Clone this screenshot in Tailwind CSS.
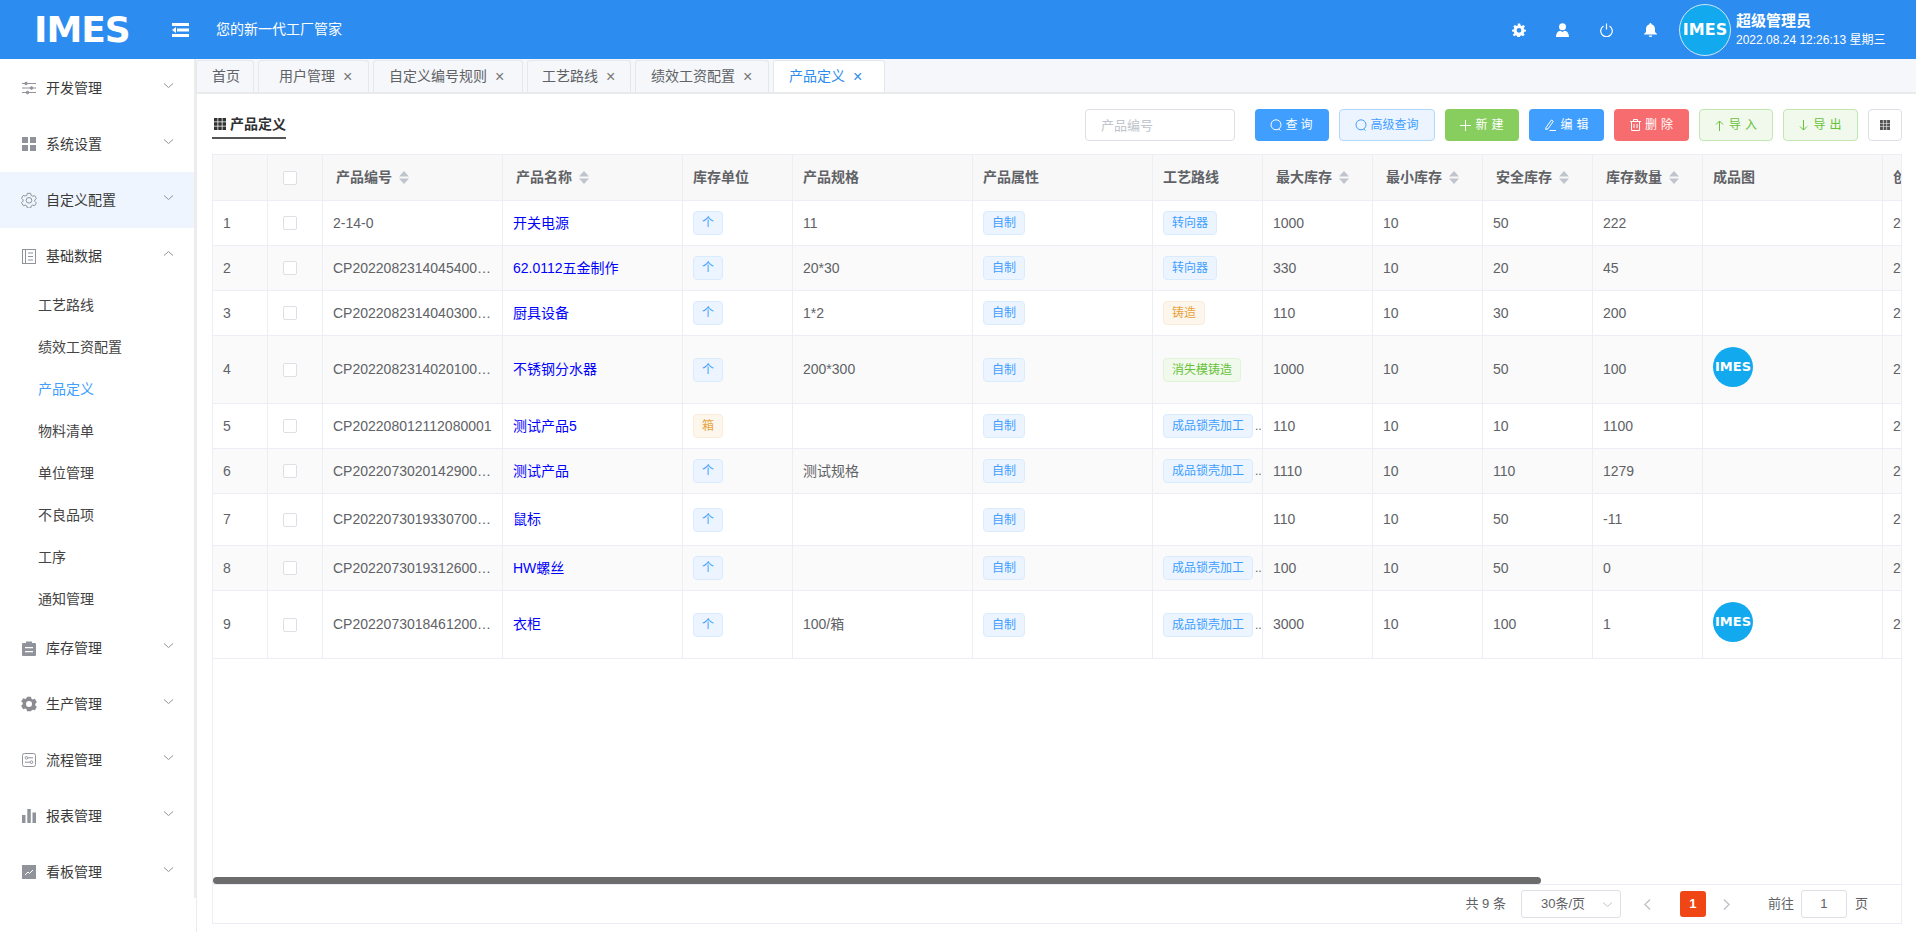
<!DOCTYPE html>
<html lang="zh-CN">
<head>
  <meta charset="UTF-8" />
  <title>产品定义</title>
  <script src="https://cdn.jsdelivr.net/npm/@tailwindcss/browser@4"></script>
</head>
<body class="h-screen overflow-hidden flex flex-col bg-white text-[14px] text-[#606266] font-['Liberation_Sans','Noto_Sans_CJK_SC',sans-serif]">

  <!-- Top bar -->
  <header class="h-[59px] shrink-0 bg-[#2d8cf0] text-white flex items-center">
    <div class="w-[172px] pl-[34px] shrink-0 text-[36px] leading-none font-bold tracking-[-1px] font-['DejaVu_Sans',sans-serif]">IMES</div>
    <svg class="w-[17px] h-[14px]" viewBox="0 0 17 14" fill="#fff"><rect width="17" height="3"/><rect x="5" y="5.5" width="12" height="3"/><path d="M0 7l4-3v6z"/><rect y="11" width="17" height="3"/></svg>
    <div class="ml-[27px]">您的新一代工厂管家</div>
    <div class="ml-auto flex items-center">
      <svg class="w-[14px] h-[14px] mr-[30px]" viewBox="0 0 24 24" fill="#fff"><path fill-rule="evenodd" d="M10 1h4l.6 3 2.3 1 2.6-1.7 2.8 2.8L20 8.700l1 2.300 3 .6v3l-3 .6-1 2.300 1.700 2.600-2.800 2.800-2.600-1.700-2.300 1-.6 3h-4l-.6-3-2.300-1-2.600 1.700-2.800-2.800L4 17.500l-1-2.300-3-.6v-3l3-.6 1-2.300-1.700-2.600 2.800-2.800 2.600 1.700 2.300-1zM12 8.500a4 4 0 1 0 0 8 4 4 0 0 0 0-8z"/></svg>
      <svg class="w-[13px] h-[14px] mr-[31px]" viewBox="0 0 13 14" fill="#fff"><circle cx="6.500" cy="3.700" r="3.500"/><path d="M0 14c0-4 2-6 4.500-6.300L6.500 9l2-1.300C11 8 13 10 13 14z"/></svg>
      <svg class="w-[13px] h-[14px] mr-[31px]" viewBox="0 0 13 14" fill="none" stroke="#fff" stroke-width="1.200"><path d="M3.500 3a5.800 5.800 0 1 0 6 0"/><path d="M6.500 0.500v6"/></svg>
      <svg class="w-[13px] h-[14px] mr-[22px]" viewBox="0 0 13 14" fill="#fff"><path d="M6.500 0c.7 0 1 .5 1 1.200C9.800 1.800 11 3.700 11 6v3l2 2v.6H0V11l2-2V6c0-2.300 1.200-4.200 3.500-4.800C5.500.5 5.800 0 6.500 0z"/><path d="M4.800 12.500h3.400a1.700 1.500 0 0 1-3.400 0z"/></svg>
      <div class="w-[52px] h-[52px] rounded-full bg-[#13a9ee] border border-[#cfe6fb] flex items-center justify-center text-[16px] leading-none font-bold font-['DejaVu_Sans',sans-serif]">IMES</div>
      <div class="ml-[5px] w-[180px]">
        <div class="text-[15px] leading-[20px] font-bold">超级管理员</div>
        <div class="text-[12px] leading-[16px] mt-[1px]">2022.08.24 12:26:13 星期三</div>
      </div>
    </div>
  </header>

  <div class="flex-1 flex min-h-0">
    <!-- Sidebar -->
    <aside class="w-[196px] shrink-0">
      <nav class="h-[839px] pt-[1px] border-r-2 border-[#ececec] text-[#3a3a3a] [&>a]:flex [&>a]:items-center [&>a]:h-[56px] [&>a]:pl-[22px] [&>a]:pr-[21px]">
        <a href="#">
          <svg class="w-[14px] h-[14px] mr-[10px]" viewBox="0 0 14 14" fill="none" stroke="#909399"><path d="M0 2.500h14M0 7h14M0 11.500h14"/><circle cx="4" cy="2.500" r="1.300" fill="#909399"/><circle cx="9.500" cy="7" r="1.300" fill="#909399"/><circle cx="5.500" cy="11.500" r="1.300" fill="#909399"/></svg>
          开发管理
          <svg class="ml-auto -mt-[6px] w-[9px] h-[5px]" viewBox="0 0 9 5" fill="none" stroke="#909399"><path d="M0 .5l4.500 4 4.500-4"/></svg>
        </a>
        <a href="#">
          <svg class="w-[14px] h-[14px] mr-[10px]" viewBox="0 0 14 14" fill="#909399"><rect width="6" height="6"/><rect x="8" width="6" height="6"/><rect y="8" width="6" height="6"/><rect x="8" y="8" width="6" height="6"/></svg>
          系统设置
          <svg class="ml-auto -mt-[6px] w-[9px] h-[5px]" viewBox="0 0 9 5" fill="none" stroke="#909399"><path d="M0 .5l4.500 4 4.500-4"/></svg>
        </a>
        <a href="#" class="bg-[#eef5fe]">
          <svg class="w-[16px] h-[16px] -ml-[1px] mr-[9px]" viewBox="0 0 24 24" fill="none" stroke="#909399" stroke-width="1.500"><path d="M9.500 2h5l.7 3 2.300 1.300 3-.9 2.500 4.300-2.300 2.300v2l2.300 2.300-2.500 4.300-3-.9-2.300 1.300-.7 3h-5l-.7-3-2.300-1.300-3 .9L.8 16l2.300-2.300v-2L.8 9.400l2.500-4.300 3 .9L8.800 5z"/><circle cx="12" cy="12.500" r="4.200"/></svg>
          自定义配置
          <svg class="ml-auto -mt-[6px] w-[9px] h-[5px]" viewBox="0 0 9 5" fill="none" stroke="#909399"><path d="M0 .5l4.500 4 4.500-4"/></svg>
        </a>
        <a href="#">
          <svg class="w-[14px] h-[15px] mr-[10px]" viewBox="0 0 14 15" fill="none" stroke="#909399"><rect x=".5" y=".5" width="13" height="14"/><path d="M3.500 .5v14M6 4h5M6 7.500h5M6 11h5"/></svg>
          基础数据
          <svg class="ml-auto -mt-[6px] w-[9px] h-[5px]" viewBox="0 0 9 5" fill="none" stroke="#909399"><path d="M0 4.500l4.500-4 4.500 4"/></svg>
        </a>
        <div class="pl-[38px] text-[#444] [&>div]:h-[42px] [&>div]:leading-[42px]">
          <div>工艺路线</div>
          <div>绩效工资配置</div>
          <div class="text-[#409eff]">产品定义</div>
          <div>物料清单</div>
          <div>单位管理</div>
          <div>不良品项</div>
          <div>工序</div>
          <div>通知管理</div>
        </div>
        <a href="#">
          <svg class="w-[14px] h-[15px] mr-[10px]" viewBox="0 0 14 15" fill="#909399"><path d="M1 2h3V.5h6V2h3a1 1 0 0 1 1 1v11a1 1 0 0 1-1 1H1a1 1 0 0 1-1-1V3a1 1 0 0 1 1-1z"/><path d="M3 6h8v1.200H3zM3 10h8v1.200H3z" fill="#fff"/></svg>
          库存管理
          <svg class="ml-auto -mt-[6px] w-[9px] h-[5px]" viewBox="0 0 9 5" fill="none" stroke="#909399"><path d="M0 .5l4.500 4 4.500-4"/></svg>
        </a>
        <a href="#">
          <svg class="w-[16px] h-[16px] -ml-[1px] mr-[9px]" viewBox="0 0 24 24" fill="#8a8c91"><path fill-rule="evenodd" d="M9 1h6l.7 3.200 2 1.100 3.100-1 3 5.200-2.400 2.200v2.400l2.400 2.200-3 5.200-3.100-1-2 1.100L15 23H9l-.7-3.200-2-1.100-3.100 1-3-5.200 2.400-2.200v-2.400L.2 8.700l3-5.200 3.100 1 2-1.100zM12 7.500a4.500 4.500 0 1 0 0 9 4.500 4.500 0 0 0 0-9z"/></svg>
          生产管理
          <svg class="ml-auto -mt-[6px] w-[9px] h-[5px]" viewBox="0 0 9 5" fill="none" stroke="#909399"><path d="M0 .5l4.500 4 4.500-4"/></svg>
        </a>
        <a href="#">
          <svg class="w-[14px] h-[14px] mr-[10px]" viewBox="0 0 14 14" fill="none" stroke="#909399"><rect x=".5" y=".5" width="13" height="13" rx="2"/><circle cx="4.500" cy="4.800" r="1.300"/><path d="M6 4.800h5M3 9.200h5"/><circle cx="9.500" cy="9.200" r="1.300"/></svg>
          流程管理
          <svg class="ml-auto -mt-[6px] w-[9px] h-[5px]" viewBox="0 0 9 5" fill="none" stroke="#909399"><path d="M0 .5l4.500 4 4.500-4"/></svg>
        </a>
        <a href="#">
          <svg class="w-[14px] h-[14px] mr-[10px]" viewBox="0 0 14 14" fill="#909399"><rect y="6" width="3.500" height="8"/><rect x="5.300" width="3.500" height="14"/><rect x="10.500" y="3.500" width="3.500" height="10.500"/></svg>
          报表管理
          <svg class="ml-auto -mt-[6px] w-[9px] h-[5px]" viewBox="0 0 9 5" fill="none" stroke="#909399"><path d="M0 .5l4.500 4 4.500-4"/></svg>
        </a>
        <a href="#">
          <svg class="w-[14px] h-[14px] mr-[10px]" viewBox="0 0 14 14"><rect width="14" height="14" fill="#909399"/><path d="M3 10l3-3 1.500 1.500L11 5" fill="none" stroke="#fff"/></svg>
          看板管理
          <svg class="ml-auto -mt-[6px] w-[9px] h-[5px]" viewBox="0 0 9 5" fill="none" stroke="#909399"><path d="M0 .5l4.500 4 4.500-4"/></svg>
        </a>
      </nav>
    </aside>

    <main class="flex-1 min-w-0 flex flex-col">
      <!-- Tabs -->
      <div class="h-[35px] shrink-0 bg-[#f5f7fa] border-b-2 border-[#e8eaec] pt-[1px] flex gap-[4px] [&>a]:h-[32px] [&>a]:flex [&>a]:items-center [&>a]:border [&>a]:border-b-0 [&>a]:border-[#e4e7ed] [&>a]:rounded-t-[3px]">
        <a href="#" class="w-[58px] pl-[15px]">首页</a>
        <a href="#" class="w-[111px] pl-[20px]">用户管理<span class="ml-[8px] text-[16px] leading-none text-[#777]">×</span></a>
        <a href="#" class="w-[150px] pl-[15px]">自定义编号规则<span class="ml-[8px] text-[16px] leading-none text-[#777]">×</span></a>
        <a href="#" class="w-[104px] pl-[14px]">工艺路线<span class="ml-[8px] text-[16px] leading-none text-[#777]">×</span></a>
        <a href="#" class="w-[134px] pl-[15px]">绩效工资配置<span class="ml-[8px] text-[16px] leading-none text-[#777]">×</span></a>
        <a href="#" class="w-[112px] pl-[15px] bg-white text-[#2d8cf0] h-[33px]">产品定义<span class="ml-[8px] text-[16px] leading-none">×</span></a>
      </div>

      <!-- Panel -->
      <section class="flex-1 min-h-0 flex flex-col pl-[15px] pr-[14px] pb-[8px] border-l border-[#ececec]">
        <div class="h-[60px] shrink-0 flex items-start">
          <div class="mt-[20px] h-[25px] border-b-2 border-[#555] flex items-start text-[#303133] font-bold">
            <svg class="w-[12px] h-[12px] mt-[4px] mx-[2px]" viewBox="0 0 12 12" fill="#303133"><path d="M0 0h3.500v3.500H0zM4.250 0h3.500v3.500h-3.500zM8.500 0H12v3.500H8.500zM0 4.250h3.500v3.500H0zM4.250 4.250h3.500v3.500h-3.500zM8.500 4.250H12v3.500H8.500zM0 8.500h3.500V12H0zM4.250 8.500h3.500V12h-3.500zM8.500 8.500H12V12H8.500z"/></svg>
            <span class="ml-[2px] leading-[20px]">产品定义</span>
          </div>
          <div class="ml-auto mt-[15px] flex h-[32px] [&>button]:h-[32px] [&>button]:rounded-[4px] [&>button]:text-[12px] [&>button]:flex [&>button]:items-center [&>button]:justify-center">
            <input class="w-[150px] h-[32px] border border-[#dcdfe6] rounded-[4px] pl-[15px] text-[13px] placeholder:text-[#c0c4cc] mr-[20px]" placeholder="产品编号" />
            <button class="w-[74px] pl-[2px] bg-[#409eff] text-white tracking-[3px]">
              <svg class="w-[12px] h-[12px] mr-[3px]" viewBox="0 0 12 12" fill="none" stroke="#fff"><circle cx="6" cy="5.800" r="5"/><path d="M8.800 10l1.700 1.600"/></svg>查询
            </button>
            <button class="w-[96px] ml-[10px] bg-[#ecf5ff] border border-[#b3d8ff] text-[#409eff]">
              <svg class="w-[12px] h-[12px] mr-[3px]" viewBox="0 0 12 12" fill="none" stroke="#409eff"><circle cx="6" cy="5.800" r="5"/><path d="M8.800 10l1.700 1.600"/></svg>高级查询
            </button>
            <button class="w-[74px] ml-[10px] pl-[4px] bg-[#87ce5f] text-white tracking-[4px]">
              <svg class="w-[11px] h-[11px] mr-[4px]" viewBox="0 0 11 11" stroke="#fff"><path d="M5.500 0v11M0 5.500h11"/></svg>新建
            </button>
            <button class="w-[75px] ml-[10px] pl-[4px] bg-[#409eff] text-white tracking-[4px]">
              <svg class="w-[12px] h-[12px] mr-[4px]" viewBox="0 0 12 12" fill="none" stroke="#fff"><path d="M2 8.500L7.500 1l1.800 1.300-5.300 7.500-2.300.7zM5.500 11.500H12"/></svg>编辑
            </button>
            <button class="w-[75px] ml-[10px] pl-[4px] bg-[#f76c6f] text-white tracking-[4px]">
              <svg class="w-[11px] h-[12px] mr-[4px]" viewBox="0 0 11 12" fill="none" stroke="#fff"><path d="M0 2.500h11M3.500 2.500V.5h4v2M1.500 2.500v9h8v-9M4 5v4M7 5v4"/></svg>删除
            </button>
            <button class="w-[74px] ml-[10px] pl-[4px] bg-[#f0f9eb] border border-[#c2e7b0] text-[#67c23a] tracking-[4px]">
              <svg class="w-[9px] h-[11px] mr-[5px]" viewBox="0 0 9 11" fill="none" stroke="#67c23a"><path d="M4.500 11V1M1 4.500L4.500 1 8 4.500"/></svg>导入
            </button>
            <button class="w-[75px] ml-[10px] pl-[4px] bg-[#f0f9eb] border border-[#c2e7b0] text-[#67c23a] tracking-[4px]">
              <svg class="w-[9px] h-[11px] mr-[5px]" viewBox="0 0 9 11" fill="none" stroke="#67c23a"><path d="M4.500 0v10M1 6.500L4.500 10 8 6.500"/></svg>导出
            </button>
            <button class="w-[34px] ml-[10px] border border-[#dcdfe6]">
              <svg class="w-[10px] h-[10px]" viewBox="0 0 12 12" fill="#555"><path d="M0 0h3.500v3.500H0zM4.250 0h3.500v3.500h-3.500zM8.500 0H12v3.500H8.500zM0 4.250h3.500v3.500H0zM4.250 4.250h3.500v3.500h-3.500zM8.500 4.250H12v3.500H8.500zM0 8.500h3.500V12H0zM4.250 8.500h3.500V12h-3.500zM8.500 8.500H12V12H8.500z"/></svg>
            </button>
          </div>
        </div>

        <!-- Table -->
        <div class="flex-1 min-h-0 flex flex-col border border-[#ebeef5]">
          <div class="relative flex-1 min-h-0 overflow-hidden">
            <table class="table-fixed w-[2150px] border-separate border-spacing-0 text-left [&_td]:border-r [&_td]:border-b [&_td]:border-[#ebeef5] [&_td]:px-[10px] [&_td]:overflow-hidden [&_td]:whitespace-nowrap [&_td]:text-ellipsis [&_th]:border-r [&_th]:border-b [&_th]:border-[#ebeef5] [&_th]:bg-[#f8f8f9] [&_th]:px-[10px] [&_th]:whitespace-nowrap [&_th]:overflow-hidden [&_th]:h-[46px] [&_th]:font-bold [&_th]:text-[#606266] [&_tr:nth-child(even)_td]:bg-[#fafafa]">
              <colgroup>
                <col class="w-[55px]" /><col class="w-[55px]" /><col class="w-[180px]" /><col class="w-[180px]" /><col class="w-[110px]" /><col class="w-[180px]" /><col class="w-[180px]" /><col class="w-[110px]" /><col class="w-[110px]" /><col class="w-[110px]" /><col class="w-[110px]" /><col class="w-[110px]" /><col class="w-[180px]" /><col class="w-[480px]" />
              </colgroup>
              <thead>
                <tr>
                  <th></th>
                  <th><span class="block w-[14px] h-[14px] ml-[5px] border border-[#dcdfe6] rounded-[2px] bg-white"></span></th>
                  <th class="!pl-[13px]"><div class="flex items-center">产品编号<svg class="ml-[7px] w-[10px] h-[13px]" viewBox="0 0 10 13" fill="#c0c4cc"><path d="M5 0l5 5.500H0zM5 13l5-5.500H0z"/></svg></div></th>
                  <th class="!pl-[13px]"><div class="flex items-center">产品名称<svg class="ml-[7px] w-[10px] h-[13px]" viewBox="0 0 10 13" fill="#c0c4cc"><path d="M5 0l5 5.500H0zM5 13l5-5.500H0z"/></svg></div></th>
                  <th>库存单位</th>
                  <th>产品规格</th>
                  <th>产品属性</th>
                  <th>工艺路线</th>
                  <th class="!pl-[13px]"><div class="flex items-center">最大库存<svg class="ml-[7px] w-[10px] h-[13px]" viewBox="0 0 10 13" fill="#c0c4cc"><path d="M5 0l5 5.500H0zM5 13l5-5.500H0z"/></svg></div></th>
                  <th class="!pl-[13px]"><div class="flex items-center">最小库存<svg class="ml-[7px] w-[10px] h-[13px]" viewBox="0 0 10 13" fill="#c0c4cc"><path d="M5 0l5 5.500H0zM5 13l5-5.500H0z"/></svg></div></th>
                  <th class="!pl-[13px]"><div class="flex items-center">安全库存<svg class="ml-[7px] w-[10px] h-[13px]" viewBox="0 0 10 13" fill="#c0c4cc"><path d="M5 0l5 5.500H0zM5 13l5-5.500H0z"/></svg></div></th>
                  <th class="!pl-[13px]"><div class="flex items-center">库存数量<svg class="ml-[7px] w-[10px] h-[13px]" viewBox="0 0 10 13" fill="#c0c4cc"><path d="M5 0l5 5.500H0zM5 13l5-5.500H0z"/></svg></div></th>
                  <th>成品图</th>
                  <th>创建时间</th>
                </tr>
              </thead>
              <tbody class="[&_tr]:h-[45px]">
                <tr>
                  <td>1</td>
                  <td><span class="block w-[14px] h-[14px] ml-[5px] border border-[#dcdfe6] rounded-[2px] bg-white"></span></td>
                  <td>2-14-0</td>
                  <td class="text-[#0000ff]">开关电源</td>
                  <td><span class="inline-block h-[24px] leading-[22px] px-[8px] text-[12px] rounded-[4px] border border-[#d9ecff] bg-[#ecf5ff] text-[#409eff]">个</span></td>
                  <td>11</td>
                  <td><span class="inline-block h-[24px] leading-[22px] px-[8px] text-[12px] rounded-[4px] border border-[#d9ecff] bg-[#ecf5ff] text-[#409eff]">自制</span></td>
                  <td><span class="inline-block h-[24px] leading-[22px] px-[8px] text-[12px] rounded-[4px] border border-[#d9ecff] bg-[#ecf5ff] text-[#409eff]">转向器</span></td>
                  <td>1000</td><td>10</td><td>50</td><td>222</td><td></td><td>2022-08-23 14:05:12</td>
                </tr>
                <tr>
                  <td>2</td>
                  <td><span class="block w-[14px] h-[14px] ml-[5px] border border-[#dcdfe6] rounded-[2px] bg-white"></span></td>
                  <td>CP2022082314045400001</td>
                  <td class="text-[#0000ff]">62.0112五金制作</td>
                  <td><span class="inline-block h-[24px] leading-[22px] px-[8px] text-[12px] rounded-[4px] border border-[#d9ecff] bg-[#ecf5ff] text-[#409eff]">个</span></td>
                  <td>20*30</td>
                  <td><span class="inline-block h-[24px] leading-[22px] px-[8px] text-[12px] rounded-[4px] border border-[#d9ecff] bg-[#ecf5ff] text-[#409eff]">自制</span></td>
                  <td><span class="inline-block h-[24px] leading-[22px] px-[8px] text-[12px] rounded-[4px] border border-[#d9ecff] bg-[#ecf5ff] text-[#409eff]">转向器</span></td>
                  <td>330</td><td>10</td><td>20</td><td>45</td><td></td><td>2022-08-23 14:04:54</td>
                </tr>
                <tr>
                  <td>3</td>
                  <td><span class="block w-[14px] h-[14px] ml-[5px] border border-[#dcdfe6] rounded-[2px] bg-white"></span></td>
                  <td>CP2022082314040300001</td>
                  <td class="text-[#0000ff]">厨具设备</td>
                  <td><span class="inline-block h-[24px] leading-[22px] px-[8px] text-[12px] rounded-[4px] border border-[#d9ecff] bg-[#ecf5ff] text-[#409eff]">个</span></td>
                  <td>1*2</td>
                  <td><span class="inline-block h-[24px] leading-[22px] px-[8px] text-[12px] rounded-[4px] border border-[#d9ecff] bg-[#ecf5ff] text-[#409eff]">自制</span></td>
                  <td><span class="inline-block h-[24px] leading-[22px] px-[8px] text-[12px] rounded-[4px] border border-[#faecd8] bg-[#fdf6ec] text-[#e6a23c]">铸造</span></td>
                  <td>110</td><td>10</td><td>30</td><td>200</td><td></td><td>2022-08-23 14:04:03</td>
                </tr>
                <tr class="!h-[68px]">
                  <td>4</td>
                  <td><span class="block w-[14px] h-[14px] ml-[5px] border border-[#dcdfe6] rounded-[2px] bg-white"></span></td>
                  <td>CP2022082314020100001</td>
                  <td class="text-[#0000ff]">不锈钢分水器</td>
                  <td><span class="inline-block h-[24px] leading-[22px] px-[8px] text-[12px] rounded-[4px] border border-[#d9ecff] bg-[#ecf5ff] text-[#409eff]">个</span></td>
                  <td>200*300</td>
                  <td><span class="inline-block h-[24px] leading-[22px] px-[8px] text-[12px] rounded-[4px] border border-[#d9ecff] bg-[#ecf5ff] text-[#409eff]">自制</span></td>
                  <td><span class="inline-block h-[24px] leading-[22px] px-[8px] text-[12px] rounded-[4px] border border-[#e1f3d8] bg-[#f0f9eb] text-[#67c23a]">消失模铸造</span></td>
                  <td>1000</td><td>10</td><td>50</td><td>100</td>
                  <td><div class="w-[40px] h-[40px] mb-[6px] rounded-full bg-[#13a9ee] text-white flex items-center justify-center text-[13px] font-bold font-['DejaVu_Sans',sans-serif]">IMES</div></td>
                  <td>2022-08-23 14:02:01</td>
                </tr>
                <tr>
                  <td>5</td>
                  <td><span class="block w-[14px] h-[14px] ml-[5px] border border-[#dcdfe6] rounded-[2px] bg-white"></span></td>
                  <td>CP202208012112080001</td>
                  <td class="text-[#0000ff]">测试产品5</td>
                  <td><span class="inline-block h-[24px] leading-[22px] px-[8px] text-[12px] rounded-[4px] border border-[#faecd8] bg-[#fdf6ec] text-[#e6a23c]">箱</span></td>
                  <td></td>
                  <td><span class="inline-block h-[24px] leading-[22px] px-[8px] text-[12px] rounded-[4px] border border-[#d9ecff] bg-[#ecf5ff] text-[#409eff]">自制</span></td>
                  <td class="!pr-0"><div class="flex items-center"><span class="shrink-0 h-[24px] leading-[22px] px-[8px] text-[12px] rounded-[4px] border border-[#d9ecff] bg-[#ecf5ff] text-[#409eff]">成品锁壳加工</span><span class="ml-[2px] text-[12px] leading-[16px]">..</span></div></td>
                  <td>110</td><td>10</td><td>10</td><td>1100</td><td></td><td>2022-08-01 21:12:08</td>
                </tr>
                <tr>
                  <td>6</td>
                  <td><span class="block w-[14px] h-[14px] ml-[5px] border border-[#dcdfe6] rounded-[2px] bg-white"></span></td>
                  <td>CP2022073020142900001</td>
                  <td class="text-[#0000ff]">测试产品</td>
                  <td><span class="inline-block h-[24px] leading-[22px] px-[8px] text-[12px] rounded-[4px] border border-[#d9ecff] bg-[#ecf5ff] text-[#409eff]">个</span></td>
                  <td>测试规格</td>
                  <td><span class="inline-block h-[24px] leading-[22px] px-[8px] text-[12px] rounded-[4px] border border-[#d9ecff] bg-[#ecf5ff] text-[#409eff]">自制</span></td>
                  <td class="!pr-0"><div class="flex items-center"><span class="shrink-0 h-[24px] leading-[22px] px-[8px] text-[12px] rounded-[4px] border border-[#d9ecff] bg-[#ecf5ff] text-[#409eff]">成品锁壳加工</span><span class="ml-[2px] text-[12px] leading-[16px]">..</span></div></td>
                  <td>1110</td><td>10</td><td>110</td><td>1279</td><td></td><td>2022-07-30 20:14:29</td>
                </tr>
                <tr class="!h-[52px]">
                  <td>7</td>
                  <td><span class="block w-[14px] h-[14px] ml-[5px] border border-[#dcdfe6] rounded-[2px] bg-white"></span></td>
                  <td>CP2022073019330700001</td>
                  <td class="text-[#0000ff]">鼠标</td>
                  <td><span class="inline-block h-[24px] leading-[22px] px-[8px] text-[12px] rounded-[4px] border border-[#d9ecff] bg-[#ecf5ff] text-[#409eff]">个</span></td>
                  <td></td>
                  <td><span class="inline-block h-[24px] leading-[22px] px-[8px] text-[12px] rounded-[4px] border border-[#d9ecff] bg-[#ecf5ff] text-[#409eff]">自制</span></td>
                  <td></td>
                  <td>110</td><td>10</td><td>50</td><td>-11</td><td></td><td>2022-07-30 19:33:07</td>
                </tr>
                <tr>
                  <td>8</td>
                  <td><span class="block w-[14px] h-[14px] ml-[5px] border border-[#dcdfe6] rounded-[2px] bg-white"></span></td>
                  <td>CP2022073019312600001</td>
                  <td class="text-[#0000ff]">HW螺丝</td>
                  <td><span class="inline-block h-[24px] leading-[22px] px-[8px] text-[12px] rounded-[4px] border border-[#d9ecff] bg-[#ecf5ff] text-[#409eff]">个</span></td>
                  <td></td>
                  <td><span class="inline-block h-[24px] leading-[22px] px-[8px] text-[12px] rounded-[4px] border border-[#d9ecff] bg-[#ecf5ff] text-[#409eff]">自制</span></td>
                  <td class="!pr-0"><div class="flex items-center"><span class="shrink-0 h-[24px] leading-[22px] px-[8px] text-[12px] rounded-[4px] border border-[#d9ecff] bg-[#ecf5ff] text-[#409eff]">成品锁壳加工</span><span class="ml-[2px] text-[12px] leading-[16px]">..</span></div></td>
                  <td>100</td><td>10</td><td>50</td><td>0</td><td></td><td>2022-07-30 19:31:26</td>
                </tr>
                <tr class="!h-[68px]">
                  <td>9</td>
                  <td><span class="block w-[14px] h-[14px] ml-[5px] border border-[#dcdfe6] rounded-[2px] bg-white"></span></td>
                  <td>CP2022073018461200001</td>
                  <td class="text-[#0000ff]">衣柜</td>
                  <td><span class="inline-block h-[24px] leading-[22px] px-[8px] text-[12px] rounded-[4px] border border-[#d9ecff] bg-[#ecf5ff] text-[#409eff]">个</span></td>
                  <td>100/箱</td>
                  <td><span class="inline-block h-[24px] leading-[22px] px-[8px] text-[12px] rounded-[4px] border border-[#d9ecff] bg-[#ecf5ff] text-[#409eff]">自制</span></td>
                  <td class="!pr-0"><div class="flex items-center"><span class="shrink-0 h-[24px] leading-[22px] px-[8px] text-[12px] rounded-[4px] border border-[#d9ecff] bg-[#ecf5ff] text-[#409eff]">成品锁壳加工</span><span class="ml-[2px] text-[12px] leading-[16px]">..</span></div></td>
                  <td>3000</td><td>10</td><td>100</td><td>1</td>
                  <td><div class="w-[40px] h-[40px] mb-[6px] rounded-full bg-[#13a9ee] text-white flex items-center justify-center text-[13px] font-bold font-['DejaVu_Sans',sans-serif]">IMES</div></td>
                  <td>2022-07-30 18:46:12</td>
                </tr>
              </tbody>
            </table>
            <!-- horizontal scrollbar thumb, over the table -->
            <div class="absolute left-0 bottom-0 w-[1328px] h-[7px] rounded-[4px] bg-[#6c6c6c]"></div>
          </div>

          <!-- Pagination -->
          <div class="h-[39px] shrink-0 border-t border-[#ebeef5] flex items-center text-[13px] text-[#606266]">
            <span class="ml-auto">共 9 条</span>
            <div class="ml-[15px] w-[100px] h-[28px] border border-[#dcdfe6] rounded-[3px] flex items-center">
              <span class="ml-[19px]">30条/页</span>
              <svg class="ml-auto mr-[8px] w-[9px] h-[5px]" viewBox="0 0 9 5" fill="none" stroke="#c0c4cc"><path d="M0 .5l4.500 4 4.500-4"/></svg>
            </div>
            <svg class="ml-[23px] w-[7px] h-[11px]" viewBox="0 0 7 11" fill="none" stroke="#c0c4cc" stroke-width="1.500"><path d="M6 .5l-5 5 5 5"/></svg>
            <span class="ml-[29px] w-[26px] h-[26px] rounded-[3px] bg-[#f04515] text-white font-bold flex items-center justify-center">1</span>
            <svg class="ml-[17px] w-[7px] h-[11px]" viewBox="0 0 7 11" fill="none" stroke="#c0c4cc" stroke-width="1.500"><path d="M1 .5l5 5-5 5"/></svg>
            <span class="ml-[38px]">前往</span>
            <span class="ml-[7px] w-[46px] h-[28px] border border-[#dcdfe6] rounded-[3px] flex items-center justify-center">1</span>
            <span class="ml-[8px] mr-[33px]">页</span>
          </div>
        </div>
      </section>
    </main>
  </div>
</body>
</html>
